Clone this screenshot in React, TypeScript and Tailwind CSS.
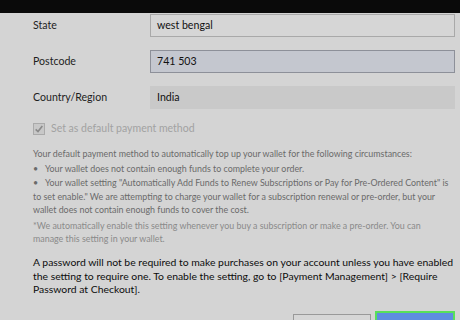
import React from 'react';

const font = { fontFamily: 'Lato, "Noto Sans", sans-serif' };

function Field({ label, value, variant }: { label: string; value: string; variant: 'plain' | 'focus' | 'readonly' }) {
  const box =
    variant === 'plain'
      ? 'border border-[#a9a9a9] bg-[#d6d6d6]'
      : variant === 'focus'
      ? 'border border-[#8d9099] bg-[#c4c7cf]'
      : 'border border-transparent bg-[#c9c9c9]';
  return (
    <div className="flex items-center h-[23px]">
      <div className="w-[117px] text-[10.6px] text-[#1e1e1e]">{label}</div>
      <div className={`flex-1 h-full flex items-center px-[6px] text-[10.6px] text-[#111] ${box}`}>{value}</div>
    </div>
  );
}

function Bullet({ children }: { children: React.ReactNode }) {
  return (
    <div className="flex whitespace-nowrap">
      <span className="w-[12px] shrink-0">•</span>
      <span>{children}</span>
    </div>
  );
}

export default function App() {
  return (
    <div className="w-[460px] h-[320px] overflow-hidden bg-[#d4d4d4]" style={font}>
      <div className="h-[13px] bg-[#0a0a0a]" />
      <div className="pl-[33px] pr-[5px] pt-[1px]">
        <div className="flex flex-col gap-[13px]">
          <Field label="State" value="west bengal" variant="plain" />
          <Field label="Postcode" value="741 503" variant="focus" />
          <Field label="Country/Region" value="India" variant="readonly" />
        </div>

        <div className="flex items-center gap-[6px] mt-[12px] h-[16px]">
          <div className="w-[12px] h-[12px] border border-[#aaa] bg-[#c8c8c8] flex items-center justify-center">
            <svg viewBox="0 0 12 12" className="w-[10px] h-[10px]">
              <path d="M2 6.5 L4.8 9 L10 2.5" fill="none" stroke="#8a8a8a" strokeWidth="2" />
            </svg>
          </div>
          <span className="text-[10.5px] text-[#a2a2a2]">Set as default payment method</span>
        </div>

        <div className="mt-[10px] text-[8.9px] leading-[13.7px] text-[#6a6a6a] whitespace-nowrap">
          <div className="mb-[1.5px]">Your default payment method to automatically top up your wallet for the following circumstances:</div>
          <Bullet>Your wallet does not contain enough funds to complete your order.</Bullet>
          <Bullet>Your wallet setting "Automatically Add Funds to Renew Subscriptions or Pay for Pre-Ordered Content" is</Bullet>
          <div>to set enable." We are attempting to charge your wallet for a subscription renewal or pre-order, but your</div>
          <div>wallet does not contain enough funds to cover the cost.</div>
          <div className="mt-[1.5px] text-[#8a8a8a]">
            <div>*We automatically enable this setting whenever you buy a subscription or make a pre-order. You can</div>
            <div>manage this setting in your wallet.</div>
          </div>
        </div>

        <div className="mt-[10px] text-[10.4px] leading-[13.6px] text-[#0c0c0c] whitespace-nowrap">
          <div>A password will not be required to make purchases on your account unless you have enabled</div>
          <div>the setting to require one. To enable the setting, go to [Payment Management] &gt; [Require</div>
          <div>Password at Checkout].</div>
        </div>

        <div className="flex justify-end gap-[4px] mt-[17px]">
          <div className="w-[78px] h-[14px] border border-[#999] bg-[#d6d6d6]" />
          <div className="w-[80px] h-[16px] -mt-[3px] border-2 border-[#57e05a] bg-[#5e8de0]" />
        </div>
      </div>
    </div>
  );
}
